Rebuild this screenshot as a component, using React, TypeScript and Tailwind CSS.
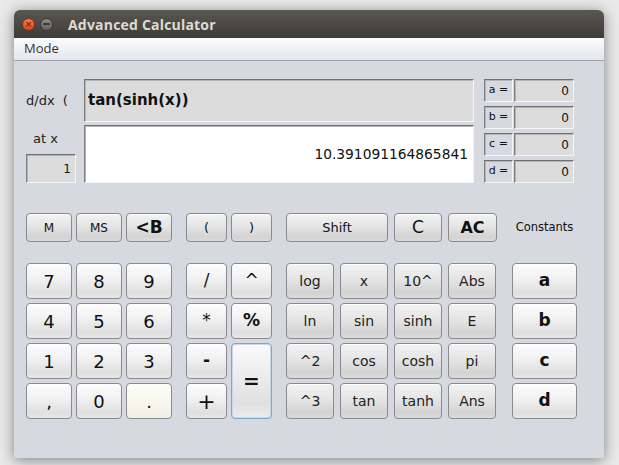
import React from "react";

const font = "font-['DejaVu_Sans',sans-serif]";
const btn =
  "flex items-center justify-center rounded-[4px] border border-[#8a8a8a] text-[#111] shadow-[inset_0_1px_0_#ffffff]";
const light = "bg-[linear-gradient(#fcfcfc,#f2f2f2_40%,#dfdfdf_85%,#e8e8e8)]";
const gray = "bg-[linear-gradient(#f3f3f3,#e5e5e5_45%,#d3d3d3_85%,#dcdcdc)]";
const inset =
  "border border-t-[#707070] border-l-[#808080] border-b-[#f6f6f6] border-r-[#f6f6f6] shadow-[inset_1px_1px_0_#b4b4b4]";

function Btn({
  label,
  tone = "light",
  className = "",
}: {
  label: string;
  tone?: "light" | "gray";
  className?: string;
}) {
  return (
    <div className={`${btn} ${tone === "light" ? light : gray} ${className}`}>
      {label}
    </div>
  );
}

export default function App() {
  const nums = ["7", "8", "9", "4", "5", "6", "1", "2", "3", ",", "0", "."];
  const funcs = [
    "log", "x", "10^", "Abs",
    "ln", "sin", "sinh", "E",
    "^2", "cos", "cosh", "pi",
    "^3", "tan", "tanh", "Ans",
  ];
  const vars = ["a", "b", "c", "d"];

  return (
    <div className={`w-[619px] h-[465px] bg-[#e9e9e9] pl-[14px] pt-[10px] ${font}`}>
      <div className="w-[590px] h-[448px] flex flex-col rounded-t-[6px] overflow-hidden shadow-[0_2px_14px_rgba(0,0,0,0.45)]">
        {/* Title bar */}
        <div className="h-[28px] flex items-center bg-[linear-gradient(#5a5751,#3e3c38)] pl-[8px]">
          <div className="w-[13px] h-[13px] rounded-full bg-[linear-gradient(#f77a4e,#d9461c)] border border-[#8a2e12] flex items-center justify-center text-[9px] leading-none text-[#4a1a0a]">
            ×
          </div>
          <div className="ml-[5px] w-[13px] h-[13px] rounded-full bg-[linear-gradient(#8e8c86,#65635e)] border border-[#3a3936] flex items-center justify-center">
            <div className="w-[7px] h-[1.5px] bg-[#3c3b38]" />
          </div>
          <span className="ml-[15px] text-[14px] font-bold text-[#dfdbd2] font-['Open_Sans',sans-serif] tracking-[0.2px]">
            Advanced Calculator
          </span>
        </div>

        {/* Menu bar */}
        <div className="h-[23px] flex items-center bg-[linear-gradient(#fbfcfd,#e4e6ea)] border-b border-[#9ea2ad] pl-[10px]">
          <span className="text-[13px] text-[#333] font-['Open_Sans',sans-serif]">Mode</span>
        </div>

        {/* Body */}
        <div className="flex-1 bg-[#d6d9df] pl-[12px] pt-[18px]">
          {/* Display section */}
          <div className="flex items-start">
            <div className="w-[58px] flex flex-col">
              <div className="h-[43px] flex items-center text-[13px] text-[#222] whitespace-pre">d/dx  (</div>
              <div className="h-[32px] flex items-center pl-[7px] pt-[2px] text-[13px] text-[#222]">at x</div>
              <div className={`w-[50px] h-[29px] bg-[#dcdcdc] ${inset} flex items-center justify-end pr-[4px] text-[12px] text-[#111]`}>
                1
              </div>
            </div>
            <div className="w-[390px] flex flex-col gap-[3px]">
              <div className={`h-[43px] bg-[#dcdcdc] ${inset} flex items-center pl-[3px] text-[15px] font-bold text-[#111]`}>
                tan(sinh(x))
              </div>
              <div className={`h-[58px] bg-white ${inset} flex items-center justify-end pr-[5px] text-[13.8px] text-[#111]`}>
                10.391091164865841
              </div>
            </div>
            <div className="ml-[10px] flex flex-col gap-[4px]">
              {vars.map((v) => (
                <div key={v} className="flex h-[23px]">
                  <div className={`w-[29px] ${inset} bg-[#d6d9df] flex items-center justify-center text-[11px] text-[#111]`}>
                    {v} =
                  </div>
                  <div className={`ml-[1px] w-[60px] ${inset} bg-[#dcdcdc] flex items-center justify-end pr-[4px] text-[12px] text-[#111]`}>
                    0
                  </div>
                </div>
              ))}
            </div>
          </div>

          {/* Top button row */}
          <div className="mt-[30px] flex items-center h-[29px]">
            <div className="flex gap-[4px]">
              <Btn label="M" tone="gray" className="w-[46px] h-[29px] text-[12px]" />
              <Btn label="MS" tone="gray" className="w-[46px] h-[29px] text-[12px]" />
              <Btn label="<B" tone="gray" className="w-[46px] h-[29px] text-[17px] font-bold" />
            </div>
            <div className="ml-[14px] flex gap-[4px]">
              <Btn label="(" tone="gray" className="w-[41px] h-[29px] text-[13px]" />
              <Btn label=")" tone="gray" className="w-[41px] h-[29px] text-[13px]" />
            </div>
            <Btn label="Shift" tone="gray" className="ml-[14px] w-[102px] h-[29px] text-[13px]" />
            <Btn label="C" tone="gray" className="ml-[6px] w-[48px] h-[29px] text-[17px] font-medium" />
            <Btn label="AC" tone="gray" className="ml-[6px] w-[49px] h-[29px] text-[16px] font-bold" />
            <div className="ml-[15px] w-[65px] text-center text-[11.5px] text-[#111]">Constants</div>
          </div>

          {/* Main keypad */}
          <div className="mt-[21px] flex items-start">
            <div className="grid grid-cols-[46px_46px_46px] auto-rows-[36px] gap-[4px]">
              {nums.map((n) => (
                <Btn
                  key={n}
                  label={n}
                  className={`text-[18px] ${n === "." ? "bg-[linear-gradient(#fdfdf8,#f7f7ef_50%,#efefe6)]" : ""}`}
                />
              ))}
            </div>
            <div className="ml-[14px] grid grid-cols-[41px_41px] grid-rows-[36px_36px_36px_36px] gap-[4px]">
              <Btn label="/" className="text-[17px]" />
              <Btn label="^" className="text-[17px]" />
              <Btn label="*" className="text-[17px]" />
              <Btn label="%" className="text-[17px] font-bold" />
              <Btn label="-" className="text-[17px] font-bold" />
              <div
                className={`row-span-2 flex items-center justify-center rounded-[4px] border border-[#7ea7d2] shadow-[inset_0_0_0_1px_#c5d8ec] text-[#111] text-[20px] font-bold bg-[linear-gradient(#fafafa,#ececec_45%,#e0e0e0_80%,#ececec)]`}
              >
                =
              </div>
              <Btn label="+" className="text-[22px]" />
            </div>
            <div className="ml-[14px] grid grid-cols-[48px_48px_48px_48px] auto-rows-[36px] gap-x-[6px] gap-y-[4px]">
              {funcs.map((f) => (
                <Btn key={f} label={f} tone="gray" className="text-[14px] text-[#222]" />
              ))}
            </div>
            <div className="ml-[16px] flex flex-col gap-[4px]">
              {vars.map((v) => (
                <Btn key={v} label={v} className="w-[65px] h-[36px] text-[17px] font-bold" />
              ))}
            </div>
          </div>
        </div>
      </div>
    </div>
  );
}
